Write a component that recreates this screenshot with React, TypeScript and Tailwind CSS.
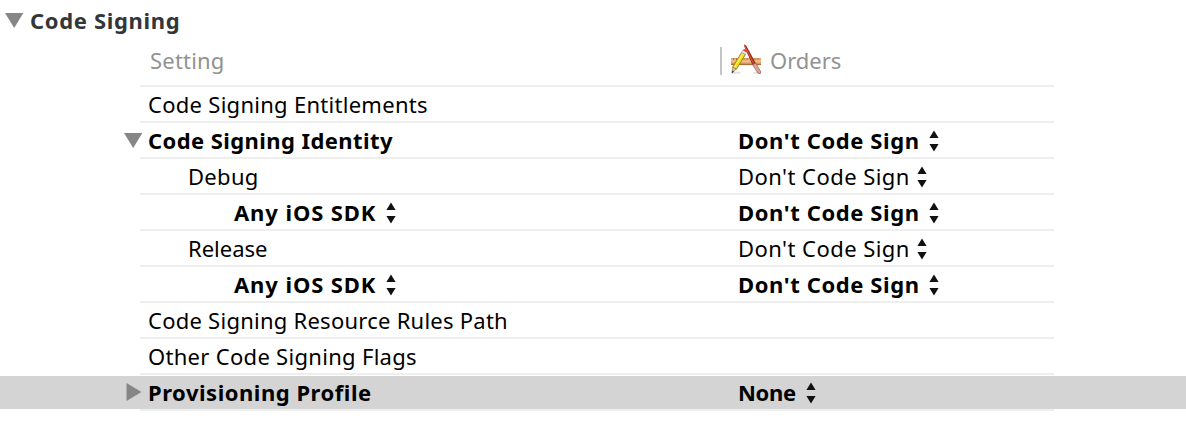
import React from "react";

function Stepper({ className = "" }: { className?: string }) {
  return (
    <svg className={`mt-0.5 shrink-0 ${className}`} width="10" height="22" viewBox="0 0 10 22" fill="#111">
      <path d="M5 0.5 9.6 8H0.4zM5 21.5 9.6 14H0.4z" />
    </svg>
  );
}

function Disclosure({ open }: { open: boolean }) {
  return (
    <svg className="shrink-0" width="20" height="20" viewBox="0 0 20 20" fill="#868686">
      {open ? <path d="M0 3H18.3L9.2 18z" /> : <path d="M2.5 1V19L17.5 10z" />}
    </svg>
  );
}

function ToolsIcon() {
  return (
    <svg className="shrink-0" width="32" height="32" viewBox="0 0 32 32">
      <defs>
        <linearGradient id="wood" x1="0" y1="0" x2="0" y2="1">
          <stop offset="0" stopColor="#dba265" />
          <stop offset="0.5" stopColor="#efc08a" />
          <stop offset="1" stopColor="#b87a3e" />
        </linearGradient>
      </defs>
      <ellipse cx="6" cy="28.7" rx="5" ry="1" fill="#000" opacity="0.12" />
      <ellipse cx="27" cy="28.7" rx="4" ry="1" fill="#000" opacity="0.12" />
      <rect x="1" y="14" width="30" height="7" fill="url(#wood)" />
      <path d="M3.5 14v2M6.5 14v2M9.5 14v2M14 14v2M17 14v2M22 14v2M25 14v2M28 14v2" stroke="#a66f3b" strokeWidth="0.8" />
      <path d="M1 20.6H31" stroke="#a3652f" strokeWidth="0.8" />
      <path d="M14 0.2 16.2 1.6 25.8 19.2 22.4 20.8 14.8 4z" fill="#a02a1a" />
      <path d="M14.8 2 23.6 19.6" stroke="#d9694f" strokeWidth="0.9" />
      <path d="M22.6 20.7 25.8 19.2 30.6 27.3 30.4 29.6 28 29.2z" fill="#dba69a" stroke="#8d4a42" strokeWidth="0.6" />
      <path d="M11.6 8.4 15.4 10.5 6.3 25.2 2.6 23.2z" fill="#f5dc1c" stroke="#8c7410" strokeWidth="0.8" />
      <path d="M13 9.6 4.2 23.6" stroke="#fff57a" strokeWidth="1" />
      <path d="M11.6 8.4 12.8 6.2 16.6 8.3 15.4 10.5z" fill="#e4e9ed" stroke="#888" strokeWidth="0.4" />
      <path d="M12.8 6.2C13.8 4.2 17.4 5.8 16.6 8.3z" fill="#ef3030" />
      <path d="M2.6 23.2 6.3 25.2 2 29z" fill="#dfc391" stroke="#76613d" strokeWidth="0.5" />
      <path d="M2.2 26.6 3.9 27.5 1.8 29.4z" fill="#333" />
    </svg>
  );
}

type Row = {
  label: string;
  labelClass: string;
  stepper?: boolean;
  value?: string;
  valueClass?: string;
  open?: boolean;
  selected?: boolean;
};

const boldSign = "mr-[9px] font-bold tracking-[0.6px]";
const plainSign = "mr-[7px] tracking-[0.45px]";

const rows: Row[] = [
  { label: "Code Signing Entitlements", labelClass: "tracking-[0.28px]" },
  { label: "Code Signing Identity", labelClass: "font-bold tracking-[0.42px]", value: "Don't Code Sign", valueClass: boldSign, open: true },
  { label: "Debug", labelClass: "pl-10 tracking-[0.3px]", value: "Don't Code Sign", valueClass: plainSign },
  { label: "Any iOS SDK", labelClass: "pl-[86px] font-bold tracking-[0.9px]", stepper: true, value: "Don't Code Sign", valueClass: boldSign },
  { label: "Release", labelClass: "pl-10", value: "Don't Code Sign", valueClass: plainSign },
  { label: "Any iOS SDK", labelClass: "pl-[86px] font-bold tracking-[0.9px]", stepper: true, value: "Don't Code Sign", valueClass: boldSign },
  { label: "Code Signing Resource Rules Path", labelClass: "tracking-[0.25px]" },
  { label: "Other Code Signing Flags", labelClass: "tracking-[0.3px]" },
  { label: "Provisioning Profile", labelClass: "font-bold tracking-[0.52px]", value: "None", valueClass: "mr-2.5 font-bold tracking-[-0.3px]", open: false, selected: true },
];

function SettingRow({ row }: { row: Row }) {
  return (
    <div>
      <div className={row.selected ? "mt-px flex h-[33px] items-center bg-[#d4d4d4] pb-0.5" : "flex h-[34px] items-center"}>
        <div className="flex w-[148px] shrink-0 justify-end pr-1">
          {row.open !== undefined && <Disclosure open={row.open} />}
        </div>
        <div className="flex w-[590px] shrink-0 items-center">
          <span className={row.labelClass}>{row.label}</span>
          {row.stepper && <Stepper className="ml-2.5" />}
        </div>
        {row.value && (
          <div className="flex items-center">
            <span className={row.valueClass}>{row.value}</span>
            <Stepper />
          </div>
        )}
      </div>
      <div className="ml-[140px] h-0.5 w-[914px] bg-[#eeeeee]" />
    </div>
  );
}

export default function App() {
  return (
    <div className="h-[432px] w-[1186px] overflow-hidden whitespace-nowrap bg-white font-['Noto_Sans',sans-serif] text-[22px] leading-[34px] text-black">
      <div className="flex h-[44px] items-center pb-1 pl-[5px]">
        <Disclosure open />
        <span className="ml-[5px] font-bold tracking-[0.66px] text-[#333638]">Code Signing</span>
      </div>
      <div className="flex h-[41px] items-center pb-[9px] pl-[150px] text-[#929292]">
        <span className="w-[570px] tracking-[0.2px]">Setting</span>
        <div className="mt-0.5 h-7 w-0.5 bg-[#c4c4c4]" />
        <div className="ml-2 flex items-center">
          <ToolsIcon />
          <span className="ml-2">Orders</span>
        </div>
      </div>
      <div className="ml-[140px] h-0.5 w-[914px] bg-[#eeeeee]" />
      {rows.map((row, i) => (
        <SettingRow key={i} row={row} />
      ))}
    </div>
  );
}
